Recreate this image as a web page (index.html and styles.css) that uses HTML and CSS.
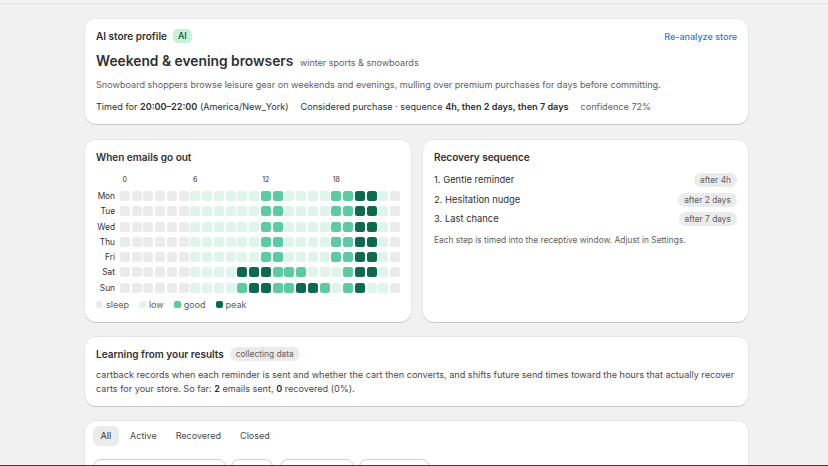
FILE: index.html
```html
<!DOCTYPE html>
<html lang="en">

<head>
    <meta charset="utf-8">
    <meta name="viewport" content="width=device-width, initial-scale=1.0">
    <title>cartback - timing</title>
    <link rel="stylesheet" href="styles.css">
</head>

<body>
    <div class="prev"></div>

    <main class="page">
        <section class="card profile">
            <div class="card-head">
                <h3>AI store profile <span class="badge-ai">AI</span></h3>
                <a href="#" class="link">Re-analyze store</a>
            </div>
            <h2>Weekend &amp; evening browsers <span class="sub">winter sports &amp; snowboards</span></h2>
            <p class="desc">Snowboard shoppers browse leisure gear on weekends and evenings, mulling over premium purchases for days before committing.</p>
            <div class="meta">
                <span>Timed for <b>20:00–22:00</b> (America/New_York)</span>
                <span>Considered purchase · sequence <b>4h, then 2 days, then 7 days</b></span>
                <span class="muted">confidence 72%</span>
            </div>
        </section>

        <div class="two">
            <section class="card">
                <h3>When emails go out</h3>
                <div class="heat" id="heat"></div>
                <div class="legend">
                    <span><i class="c-s"></i>sleep</span>
                    <span><i class="c-l"></i>low</span>
                    <span><i class="c-g"></i>good</span>
                    <span><i class="c-p"></i>peak</span>
                </div>
            </section>

            <section class="card">
                <h3>Recovery sequence</h3>
                <ul class="steps">
                    <li>1. Gentle reminder <span class="pill">after 4h</span></li>
                    <li>2. Hesitation nudge <span class="pill">after 2 days</span></li>
                    <li>3. Last chance <span class="pill">after 7 days</span></li>
                </ul>
                <p class="note">Each step is timed into the receptive window. Adjust in Settings.</p>
            </section>
        </div>

        <section class="card learning">
            <h3>Learning from your results <span class="pill grey">collecting data</span></h3>
            <p class="learn">cartback records when each reminder is sent and whether the cart then converts, and shifts future send times toward the hours that actually recover carts for your store. So far: <b>2</b> emails sent, <b>0</b> recovered (0%).</p>
        </section>

        <section class="card carts">
            <div class="tabs">
                <button class="tab valgt">All</button>
                <button class="tab">Active</button>
                <button class="tab">Recovered</button>
                <button class="tab">Closed</button>
            </div>
            <div class="fields">
                <div class="field f1"></div>
                <div class="field f2"></div>
                <div class="field f3"></div>
                <div class="field f4"></div>
            </div>
        </section>
    </main>

    <div class="edge"></div>

    <script>
        // s = sleep, l = low, g = good, p = peak (one letter per hour)
        let days = [
            ["Mon", "sssssssllllllggllllggppls"],
            ["Tue", "sssssssllllllggllllggppls"],
            ["Wed", "sssssssllllllggllllggppls"],
            ["Thu", "sssssssllllllggllllggppls"],
            ["Fri", "sssssssllllllggllllggppls"],
            ["Sat", "sssssssllllpppggglllgppls"],
            ["Sun", "sssssssllllgppggppglgplls"]
        ];

        let heat = document.querySelector("#heat");

        let hours = `<span></span>`;
        for (let h = 0; h < 24; h++) {
            hours += `<span class="hr">${h % 6 == 0 ? h : ""}</span>`;
        }
        heat.insertAdjacentHTML("beforeend", hours);

        days.forEach(day => {
            let row = `<span class="day">${day[0]}</span>`;
            day[1].slice(-24).split("").forEach(c => {
                row += `<span class="cell c-${c}"></span>`;
            });
            heat.insertAdjacentHTML("beforeend", row);
        });
    </script>
</body>

</html>
```

FILE: styles.css
```css
body {
    margin: 0;
    background-color: #f1f1f1;
    font-family: Inter, "Noto Sans", sans-serif;
    color: #303030;
}

.prev {
    height: 3px;
    background-color: #f4f4f4;
    border-bottom: 1px solid #e6e6e6;
}

.page {
    width: 663px;
    margin-left: 85px;
    padding-top: 15px;
    display: flex;
    flex-direction: column;
    gap: 15px;
}

.card {
    background-color: white;
    border-radius: 11px;
    padding: 10px 11px 11px;
    box-shadow: 0 1px 0 rgba(0, 0, 0, 0.13), 0 0 0 1px rgba(0, 0, 0, 0.04);
}

h3 {
    margin: 0;
    font-size: 10px;
    line-height: 14px;
    font-weight: 600;
    display: flex;
    align-items: center;
}

.card-head {
    display: flex;
    justify-content: space-between;
    align-items: center;
}

.badge-ai {
    margin-left: 6px;
    background-color: #c6f1db;
    color: #0c5132;
    font-size: 9px;
    font-weight: 500;
    line-height: 14px;
    padding: 0 5px;
    border-radius: 5px;
}

.link {
    color: #2f73d8;
    font-size: 9px;
    font-weight: 500;
    text-decoration: none;
}

h2 {
    margin: 8px 0 0;
    font-size: 13.8px;
    line-height: 20px;
    font-weight: 600;
}

.sub {
    font-size: 9px;
    font-weight: 400;
    color: #616161;
    margin-left: 3px;
}

.desc {
    margin: 5px 0 0;
    font-size: 9.1px;
    line-height: 13px;
    color: #616161;
}

.meta {
    margin-top: 9px;
    display: flex;
    gap: 12px;
    font-size: 9.1px;
    line-height: 13px;
}

.meta b {
    font-weight: 600;
}

.muted {
    color: #616161;
}

.two {
    margin-top: 1px;
    display: grid;
    grid-template-columns: 1fr 1fr;
    gap: 12px;
}

.two .card {
    padding-bottom: 12px;
}

/* heatmap */
.heat {
    margin-top: 11px;
    display: grid;
    grid-template-columns: 22px repeat(24, 10px);
    column-gap: 1.75px;
    row-gap: 5.3px;
}

.hr {
    font-size: 7px;
    line-height: 10px;
    color: #303030;
    text-align: center;
    white-space: nowrap;
    margin-bottom: 0.7px;
}

.day {
    font-size: 8.3px;
    line-height: 10px;
    text-align: right;
    padding-right: 3px;
}

.cell {
    height: 10px;
    border-radius: 2.5px;
}

.c-s {
    background-color: #ebebeb;
}

.c-l {
    background-color: #dff5ec;
}

.c-g {
    background-color: #5ccba1;
}

.c-p {
    background-color: #0e6a4e;
}

.legend {
    margin-top: 7px;
    display: flex;
    gap: 10px;
    font-size: 9px;
    line-height: 10px;
    color: #616161;
}

.legend span {
    display: flex;
    align-items: center;
    gap: 3px;
}

.legend i {
    width: 7px;
    height: 7px;
    border-radius: 2px;
}

/* recovery */
.steps {
    list-style: none;
    margin: 9px 0 0;
    padding: 0;
    display: flex;
    flex-direction: column;
    gap: 5.5px;
}

.steps li {
    display: flex;
    justify-content: space-between;
    align-items: center;
    font-size: 9.4px;
    line-height: 14px;
}

.pill {
    background-color: #ebebeb;
    color: #616161;
    font-size: 8.4px;
    font-weight: 400;
    line-height: 14px;
    padding: 0 6px;
    border-radius: 7px;
}

.note {
    margin: 8px 0 0;
    font-size: 8.4px;
    line-height: 12px;
    color: #616161;
}

h3 .grey {
    margin-left: 6px;
}

.learning {
    padding-bottom: 10px;
}

.learn {
    margin: 7px 0 0;
    font-size: 9.1px;
    line-height: 14px;
    color: #4a4a4a;
}

.learn b {
    color: #303030;
    font-weight: 600;
}

/* carts */
.carts {
    padding: 5px 8px 20px;
}

.tabs {
    display: flex;
    gap: 4px;
}

.tab {
    font-family: Inter, "Noto Sans", sans-serif;
    font-size: 9px;
    line-height: 20px;
    padding: 0 7.5px;
    border: none;
    border-radius: 6px;
    background-color: transparent;
    color: #4a4a4a;
}

.valgt {
    background-color: #ebebeb;
    color: #303030;
}

.fields {
    margin-top: 13px;
    display: flex;
    gap: 5px;
}

.field {
    height: 24px;
    border: 1px solid #cfcfcf;
    border-radius: 8px;
}

.f1 {
    width: 131px;
}

.f2 {
    width: 40px;
    margin-right: 2px;
}

.f3 {
    width: 72px;
}

.f4 {
    width: 69px;
}

.edge {
    position: fixed;
    left: 0;
    right: 0;
    bottom: 0;
    height: 1px;
    background-color: #3d3d3d;
}
```
